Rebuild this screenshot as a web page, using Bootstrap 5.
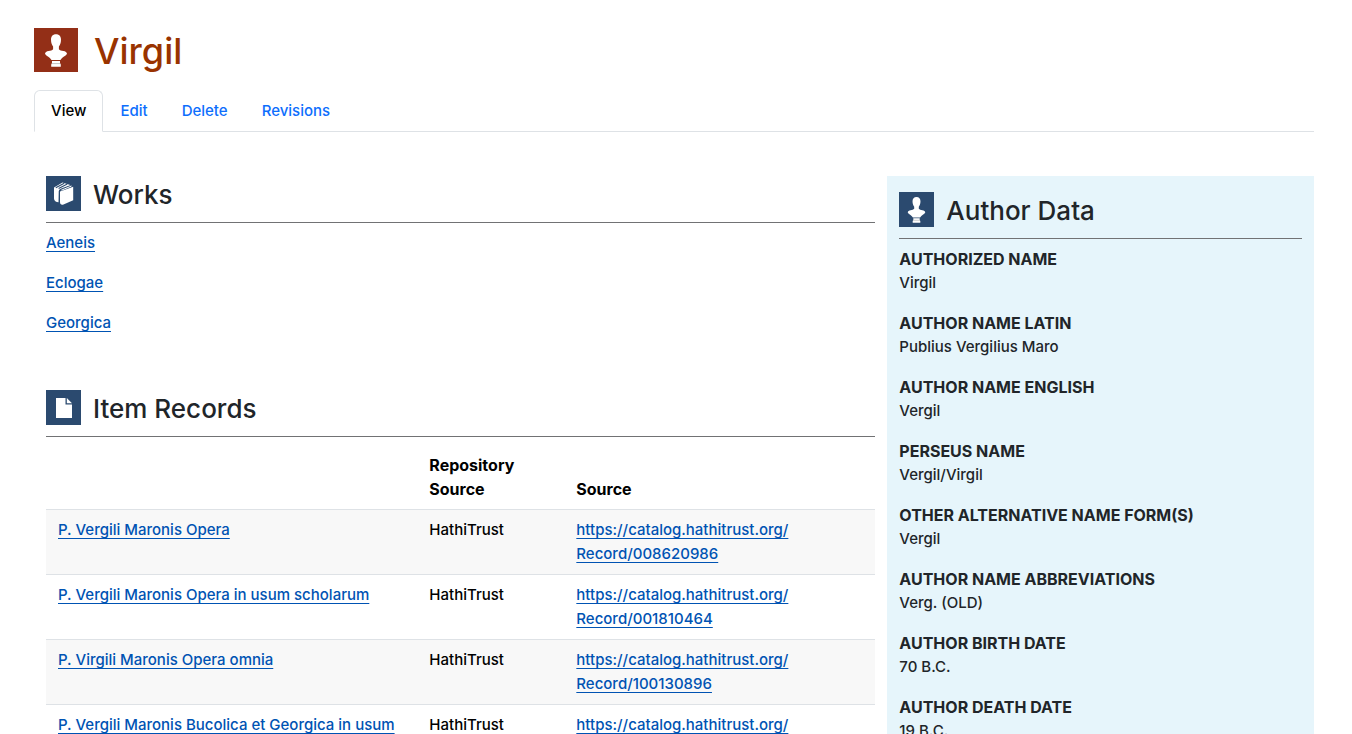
<!DOCTYPE html>
<html lang="en">
<head>
<meta charset="utf-8">
<meta name="viewport" content="width=device-width, initial-scale=1">
<title>Virgil</title>
<link href="https://cdn.jsdelivr.net/npm/bootstrap@5.3.0/dist/css/bootstrap.min.css" rel="stylesheet">
<style>
  body { font-family: Inter, "Liberation Sans", sans-serif; font-size: 15px; font-weight: 500; line-height: 24px; }
  th, dt { font-size: 16px; }
  .page-shell { padding: 28px 38px 48px 34px; }
  .page-head { margin-bottom: 18px; }
  .author-name { color: #993300; font-size: 36px; font-weight: 500; line-height: 42px; }
  .tile { flex: none; width: 35px; height: 35px; background: #2b4a6f; }
  .tile-lg { width: 44px; height: 44px; background: #932f17; }
  .nav-tabs { --bs-nav-link-color: #0d6efd; --bs-nav-tabs-link-active-color: #000; margin-bottom: 44px; }
  .nav-tabs .nav-link { padding: 8px 16px; }
  .section-head { border-bottom: 1px solid #717274; padding-bottom: 11px; margin-bottom: 8px; gap: 12px; }
  .section-head h2 { font-size: 26px; font-weight: 500; line-height: 33px; }
  .content-link { color: #0053b3; text-decoration: underline; text-decoration-skip-ink: none; text-underline-offset: 3px; text-decoration-thickness: 1px; }
  .works-list { margin-bottom: 55px; }
  .data-panel { background: #e6f5fb; padding-top: 16px; }
  .data-panel dt { text-transform: uppercase; }
  .records { table-layout: fixed; --bs-table-color: #000; --bs-table-striped-color: #000; --bs-table-striped-bg: #f8f8f8; }
  .records th, .records td { padding: 8px 12px !important; }
  .records .repo-col { width: 147px; }
  .records .source-col { width: 311px; }
</style>
</head>
<body>
<svg class="d-none" aria-hidden="true">
  <symbol id="bust" viewBox="0 0 44 44">
    <g fill="#fff">
      <path d="M22 6.300c3.300 0 5 2.200 5 5.400 0 3-1 5.400-2.100 6.700v2.800c1 1.200 2.500 1.400 4.500 1.800 2 .4 3.400 1.100 3.600 2.700-1 2.300-4.800 3.100-6.500 6.300h-9c-1.700-3.200-5.500-4-6.500-6.300.2-1.600 1.600-2.300 3.600-2.700 2-.4 3.500-.6 4.500-1.800v-2.800C18 17.100 17 14.700 17 11.700c0-3.200 1.700-5.400 5-5.400z"/>
      <path d="M18 33h8v1.800l.8 1.700v2.300h-9.600v-2.300l.8-1.700z"/>
    </g>
    <path d="M17.500 35.600h9" stroke="#000" stroke-opacity=".3" stroke-width=".8"/>
  </symbol>
</svg>
<div class="container-fluid page-shell">
  <header class="page-head d-flex align-items-end gap-3">
    <svg class="tile tile-lg" aria-hidden="true"><use href="#bust"/></svg>
    <h1 class="author-name mb-0">Virgil</h1>
  </header>

  <ul class="nav nav-tabs">
    <li class="nav-item"><a class="nav-link active" aria-current="page" href="#">View</a></li>
    <li class="nav-item"><a class="nav-link" href="#">Edit</a></li>
    <li class="nav-item"><a class="nav-link" href="#">Delete</a></li>
    <li class="nav-item"><a class="nav-link" href="#">Revisions</a></li>
  </ul>

  <div class="row mx-0">
    <main class="col-8">
      <section class="works-list">
        <div class="section-head d-flex align-items-end">
          <svg class="tile" viewBox="0 0 35 35" aria-hidden="true">
            <path fill="#fff" d="M8 11.500 16.500 6.400 25 9.200 13 14.500 12.700 26.300C10 26.300 8 24.900 8 22.500z"/>
            <path fill="#fff" d="M14 15.500 27.200 10.800v13.400L17.500 28.500c-2.200.8-3.500-.4-3.500-2.500z"/>
            <path fill="none" stroke="#2b4a6f" stroke-width="1.100" d="M9.800 11.800 18.200 7.300M12.600 12.500 21.300 8.100M13.300 26.500V15.200c.2-1.200 1-1.700 2.200-2.200l9.300-3.500"/>
            <path fill="none" stroke="#fff" d="m15.500 14.200 10-4.200"/>
          </svg>
          <h2 class="mb-0">Works</h2>
        </div>
        <p><a class="content-link" href="#">Aeneis</a></p>
        <p><a class="content-link" href="#">Eclogae</a></p>
        <p class="mb-0"><a class="content-link" href="#">Georgica</a></p>
      </section>

      <section>
        <div class="section-head d-flex align-items-end">
          <svg class="tile" viewBox="0 0 35 35" aria-hidden="true">
            <path fill="#fff" d="M10 8h9.500v6.500H26V28H10z"/>
            <path fill="#fff" d="m20.800 8 5.200 5.200h-5.200z"/>
          </svg>
          <h2 class="mb-0">Item Records</h2>
        </div>
        <table class="table table-striped records">
          <colgroup><col><col class="repo-col"><col class="source-col"></colgroup>
          <thead>
            <tr class="align-bottom"><th scope="col"></th><th scope="col">Repository Source</th><th scope="col">Source</th></tr>
          </thead>
          <tbody>
            <tr>
              <td><a class="content-link" href="#">P. Vergili Maronis Opera</a></td>
              <td>HathiTrust</td>
              <td><a class="content-link" href="#">https://catalog.hathitrust.org/<br>Record/008620986</a></td>
            </tr>
            <tr>
              <td><a class="content-link" href="#">P. Vergili Maronis Opera in usum scholarum</a></td>
              <td>HathiTrust</td>
              <td><a class="content-link" href="#">https://catalog.hathitrust.org/<br>Record/001810464</a></td>
            </tr>
            <tr>
              <td><a class="content-link" href="#">P. Virgili Maronis Opera omnia</a></td>
              <td>HathiTrust</td>
              <td><a class="content-link" href="#">https://catalog.hathitrust.org/<br>Record/100130896</a></td>
            </tr>
            <tr>
              <td><a class="content-link" href="#">P. Vergili Maronis Bucolica et Georgica in usum</a></td>
              <td>HathiTrust</td>
              <td><a class="content-link" href="#">https://catalog.hathitrust.org/</a></td>
            </tr>
          </tbody>
        </table>
      </section>
    </main>

    <aside class="col-4 data-panel">
      <div class="section-head d-flex align-items-end">
        <svg class="tile" aria-hidden="true"><use href="#bust"/></svg>
        <h2 class="mb-0">Author Data</h2>
      </div>
      <dl class="mb-0">
        <dt>Authorized Name</dt><dd class="mb-3">Virgil</dd>
        <dt>Author Name Latin</dt><dd class="mb-3">Publius Vergilius Maro</dd>
        <dt>Author Name English</dt><dd class="mb-3">Vergil</dd>
        <dt>Perseus Name</dt><dd class="mb-3">Vergil/Virgil</dd>
        <dt>Other Alternative Name Form(s)</dt><dd class="mb-3">Vergil</dd>
        <dt>Author Name Abbreviations</dt><dd class="mb-3">Verg. (OLD)</dd>
        <dt>Author Birth Date</dt><dd class="mb-3">70 B.C.</dd>
        <dt>Author Death Date</dt><dd class="mb-3">19 B.C.</dd>
      </dl>
    </aside>
  </div>
</div>
<script src="https://cdn.jsdelivr.net/npm/bootstrap@5.3.0/dist/js/bootstrap.bundle.min.js"></script>
</body>
</html>
